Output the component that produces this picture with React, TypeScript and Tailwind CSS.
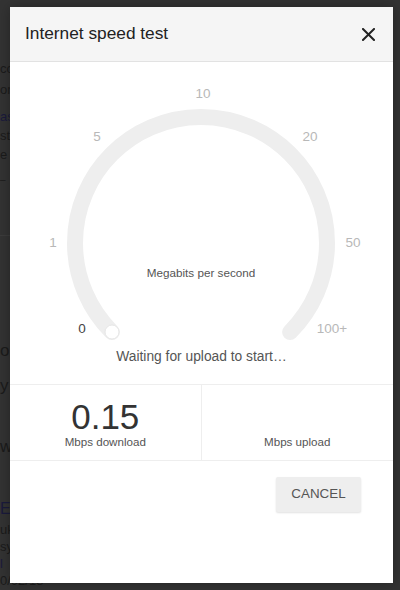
import React from "react";

const font = { fontFamily: '"Liberation Sans", Arial, sans-serif' };

// scraps of the results page that show beside the dialog
function BgLine({ text, top, color = "text-[#1b1b1b]", size = "text-[13px]" }: { text: string; top: string; color?: string; size?: string }) {
  return <div className={`whitespace-nowrap leading-none ${top} ${color} ${size}`}>{text}</div>;
}

function Gauge() {
  const labels = [
    { t: "10", x: 193, y: 31 },
    { t: "5", x: 87, y: 74 },
    { t: "20", x: 300, y: 74 },
    { t: "1", x: 43, y: 180 },
    { t: "50", x: 343, y: 180 },
    { t: "100+", x: 322, y: 266 },
  ];
  return (
    <svg width="383" height="285" viewBox="0 0 383 285" className="block">
      <path
        d="M 101.9 270.1 A 126 126 0 1 1 280.1 270.1"
        fill="none"
        stroke="#eeeeee"
        strokeWidth="16"
        strokeLinecap="round"
      />
      <circle cx="102" cy="270" r="7" fill="#ffffff" stroke="#e6e6e6" strokeWidth="1" />
      {labels.map((l) => (
        <text key={l.t} x={l.x} y={l.y} textAnchor="middle" dominantBaseline="central" fontSize="13.5" fill="#b8b8b8" style={font}>
          {l.t}
        </text>
      ))}
      <text x="72" y="266" textAnchor="middle" dominantBaseline="central" fontSize="13.5" fill="#444444" style={font}>
        0
      </text>
      <text x="191" y="210" textAnchor="middle" dominantBaseline="central" fontSize="11.7" fill="#555555" style={font}>
        Megabits per second
      </text>
    </svg>
  );
}

export default function App() {
  return (
    <div className="relative w-[400px] h-[590px] overflow-hidden bg-[#333333]" style={font}>
      {/* page behind the overlay */}
      <div className="flex flex-col">
        <BgLine text="cc" top="mt-[62px]" />
        <BgLine text="or" top="mt-[8px]" />
        <BgLine text="as" top="mt-[14px]" color="text-[#1a1a3c]" />
        <BgLine text="st" top="mt-[6px]" />
        <BgLine text="e" top="mt-[6px]" />
        <BgLine text="–" top="mt-[14px]" size="text-[10px]" />
        <div className="mt-[50px] w-[10px] h-px bg-[#3c3c3c]" />
        <BgLine text="or" top="mt-[106px]" size="text-[17px]" />
        <BgLine text="y" top="mt-[18px]" size="text-[17px]" />
        <BgLine text="w" top="mt-[44px]" size="text-[17px]" />
        <BgLine text="E" top="mt-[46px]" color="text-[#1a1a3c]" size="text-[16px]" />
        <BgLine text="uk" top="mt-[6px]" />
        <BgLine text="sy" top="mt-[4px]" />
        <BgLine text="l" top="mt-[4px]" color="text-[#1a1a3c]" />
        <BgLine text="0/02/18" top="mt-[4px]" />
      </div>

      {/* dialog */}
      <div className="absolute left-[10px] top-[7px] w-[383px] h-[576px] bg-white flex flex-col shadow-[0_0_12px_rgba(0,0,0,0.3)]">
        <div className="h-[55px] bg-[#f5f5f5] border-b border-[#e2e2e2] flex items-center justify-between pl-[15px] pr-[18px]">
          <span className="text-[17.3px] text-[#222222]">Internet speed test</span>
          <svg width="13" height="13" viewBox="0 0 13 13">
            <path d="M1 1 L12 12 M12 1 L1 12" stroke="#222222" strokeWidth="2" strokeLinecap="square" />
          </svg>
        </div>

        <Gauge />

        <div className="h-[20px] leading-[20px] mb-[17px] text-center text-[13.8px] text-[#555555]">
          Waiting for upload to start…
        </div>

        <div className="grid grid-cols-2 h-[77px] border-t border-b border-[#eeeeee]">
          <div className="flex flex-col items-center pt-[15px] border-r border-[#eeeeee]">
            <div className="text-[35px] leading-[34px] text-[#333333]">0.15</div>
            <div className="text-[11.6px] leading-[16px] text-[#555555]">Mbps download</div>
          </div>
          <div className="flex flex-col items-center pt-[15px]">
            <div className="h-[34px]" />
            <div className="text-[11.6px] leading-[16px] text-[#555555]">Mbps upload</div>
          </div>
        </div>

        <div className="flex justify-end pt-[16px] pr-[32px]">
          <button
            type="button"
            className="w-[85px] h-[35px] bg-[#eeeeee] rounded-[2px] shadow-[0_1px_2px_rgba(0,0,0,0.12)] text-[13.4px] text-[#555555] uppercase"
          >
            Cancel
          </button>
        </div>
      </div>
    </div>
  );
}
